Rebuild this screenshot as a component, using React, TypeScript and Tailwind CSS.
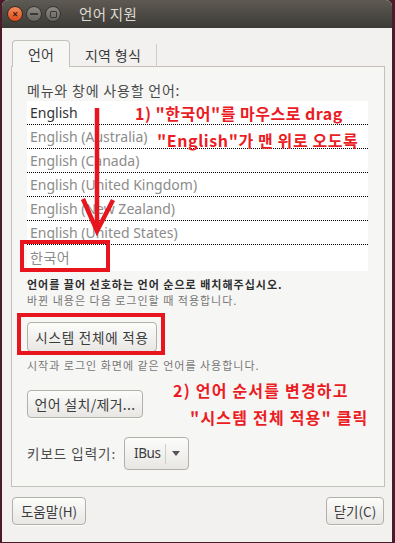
import React from "react";

const ui = { fontFamily: '"Noto Sans", "Noto Sans CJK KR", sans-serif' };
const kr = { fontFamily: '"Noto Sans CJK KR", "Noto Sans", sans-serif' };

function Btn({ children, className = "" }: { children: React.ReactNode; className?: string }) {
  return (
    <div
      className={
        "flex items-center justify-center rounded-[4px] border border-[#b3b0aa] bg-gradient-to-b from-[#fcfcfb] to-[#e8e7e4] text-[#3c3c3c] shadow-[0_1px_0_rgba(255,255,255,0.8)] " +
        className
      }
      style={kr}
    >
      {children}
    </div>
  );
}

const langs = [
  "English (Australia)",
  "English (Canada)",
  "English (United Kingdom)",
  "English (New Zealand)",
  "English (United States)",
];

export default function App() {
  return (
    <div className="relative h-[543px] w-[395px] overflow-hidden bg-[#4a1c2a]" style={ui}>
      <div className="ml-[2px] flex h-[542px] w-[390px] flex-col overflow-hidden rounded-t-[6px] bg-[#f2f1f0]">
        {/* title bar */}
        <div className="flex h-[28px] shrink-0 items-center bg-gradient-to-b from-[#5e5a53] to-[#3c3b37] pl-[5px]">
          <div className="flex h-[16px] w-[16px] items-center justify-center rounded-full border border-[#3a2a22] bg-gradient-to-b from-[#f38a5b] to-[#dc4a18] text-[10px] font-bold leading-none text-[#3d1a0c]">
            ×
          </div>
          <div className="ml-[3px] flex h-[16px] w-[16px] items-center justify-center rounded-full border border-[#34332f] bg-gradient-to-b from-[#8d8a84] to-[#66645f]">
            <div className="h-[2px] w-[8px] bg-[#3a3935]" />
          </div>
          <div className="ml-[3px] flex h-[16px] w-[16px] items-center justify-center rounded-full border border-[#34332f] bg-gradient-to-b from-[#8d8a84] to-[#66645f]">
            <div className="h-[7px] w-[7px] rounded-[1px] border-[1.5px] border-[#3a3935]" />
          </div>
          <div className="ml-[18px] text-[14.5px] tracking-[0.3px] text-[#dfdbd2]" style={kr}>
            언어 지원
          </div>
        </div>

        {/* body */}
        <div className="flex flex-1 flex-col pl-[9px] pr-[6px] pt-[12px]">
          {/* tabs */}
          <div className="relative z-10 flex h-[27px] items-end">
            <div
              className="ml-[1px] flex h-[27px] w-[58px] items-center justify-center rounded-t-[4px] border border-b-0 border-[#c4c1bb] bg-[#f6f6f5] text-[14px] text-[#3c3c3c]"
              style={kr}
            >
              언어
            </div>
            <div className="flex h-[23px] w-[87px] items-center justify-center border-r border-[#cfccc6] text-[14px] tracking-[0.3px] text-[#3c3c3c]" style={kr}>
              지역 형식
            </div>
          </div>
          {/* panel */}
          <div className="-mt-[1px] flex h-[421px] w-[374px] flex-col border border-[#c4c1bb] bg-[#f6f6f5] pl-[15px] pr-[15px]">
            <div className="mt-[14px] h-[18px] text-[14px] leading-[18px] tracking-[0.8px] text-[#4a4a4a]" style={kr}>
              메뉴와 창에 사용할 언어:
            </div>
            <div className="mt-[2px] flex h-[170px] w-[341px] flex-col bg-white">
              <div className="flex h-[24px] items-center border-b border-dotted border-black pl-[3px] text-[14px] text-[#333]">
                English
              </div>
              {langs.map((l) => (
                <div key={l} className="flex h-[24px] items-center border-b border-dotted border-black pl-[3px] text-[14px] text-[#8c8c8c]">
                  {l}
                </div>
              ))}
              <div className="flex h-[24px] items-center pl-[3px] text-[14px] tracking-[0.5px] text-[#8c8c8c]" style={kr}>
                한국어
              </div>
            </div>
            <div className="mt-[6px] whitespace-nowrap text-[11px] font-bold leading-[15px] tracking-[1px] text-[#2e2e2e]" style={kr}>
              언어를 끌어 선호하는 언어 순으로 배치해주십시오.
            </div>
            <div className="mt-[1px] whitespace-nowrap text-[11px] leading-[15px] tracking-[1px] text-[#777]" style={kr}>
              바뀐 내용은 다음 로그인할 때 적용합니다.
            </div>
            <Btn className="mt-[14px] h-[30px] w-[130px] text-[13.5px] tracking-[0.8px]">시스템 전체에 적용</Btn>
            <div className="mt-[6px] whitespace-nowrap text-[11px] leading-[15px] tracking-[1px] text-[#777]" style={kr}>
              시작과 로그인 화면에 같은 언어를 사용합니다.
            </div>
            <Btn className="mt-[17px] h-[28px] w-[116px] text-[14px] tracking-[0.3px]">언어 설치/제거...</Btn>
            <div className="mt-[19px] flex items-center">
              <div className="w-[97px] text-[13.5px] tracking-[1px] text-[#4a4a4a]" style={kr}>
                키보드 입력기:
              </div>
              <div className="flex h-[33px] w-[65px] items-center rounded-[4px] border border-[#b3b0aa] bg-gradient-to-b from-[#fcfcfb] to-[#e8e7e4]">
                <div className="ml-[9px] w-[31px] whitespace-nowrap text-[13.5px] tracking-[-0.4px] text-[#3c3c3c]">IBus</div>
                <div className="h-[20px] w-px bg-[#d0cdc7]" />
                <div className="ml-[6px] h-0 w-0 border-l-[4px] border-r-[4px] border-t-[5px] border-l-transparent border-r-transparent border-t-[#555]" />
              </div>
            </div>
          </div>
          {/* bottom buttons */}
          <div className="mt-[10px] flex justify-between pl-[1px] pr-[1px]">
            <Btn className="h-[28px] w-[74px] text-[13.5px]">도움말(H)</Btn>
            <Btn className="mr-[1px] h-[28px] w-[58px] text-[13.5px]">닫기(C)</Btn>
          </div>
        </div>
      </div>

      {/* annotations overlay */}
      <svg className="pointer-events-none absolute left-0 top-0" width="395" height="543">
        <line x1="97" y1="108" x2="97" y2="230" stroke="#e8141e" strokeWidth="4.5" />
        <polyline points="83,199 97,231 113,200" fill="none" stroke="#e8141e" strokeWidth="4.5" />
      </svg>
      <div className="pointer-events-none absolute left-[20px] top-[240px] h-[32px] w-[90px] border-[4px] border-[#e8141e]" />
      <div className="pointer-events-none absolute left-[17px] top-[313px] h-[42px] w-[148px] border-[4px] border-[#e8141e]" />
      <div className="absolute left-[135px] top-[102px] whitespace-nowrap text-[16px] font-bold leading-[22px] tracking-[0.5px] text-[#ec1c24]" style={kr}>
        1) "한국어"를 마우스로 drag
      </div>
      <div className="absolute left-[157px] top-[129px] whitespace-nowrap text-[16px] font-bold leading-[22px] tracking-[0.6px] text-[#ec1c24]" style={kr}>
        "English"가 맨 위로 오도록
      </div>
      <div className="absolute left-[173px] top-[379px] whitespace-nowrap text-[16px] font-bold leading-[22px] tracking-[1.2px] text-[#ec1c24]" style={kr}>
        2) 언어 순서를 변경하고
      </div>
      <div className="absolute left-[190px] top-[406px] whitespace-nowrap text-[16px] font-bold leading-[22px] tracking-[1.2px] text-[#ec1c24]" style={kr}>
        "시스템 전체 적용" 클릭
      </div>
    </div>
  );
}
